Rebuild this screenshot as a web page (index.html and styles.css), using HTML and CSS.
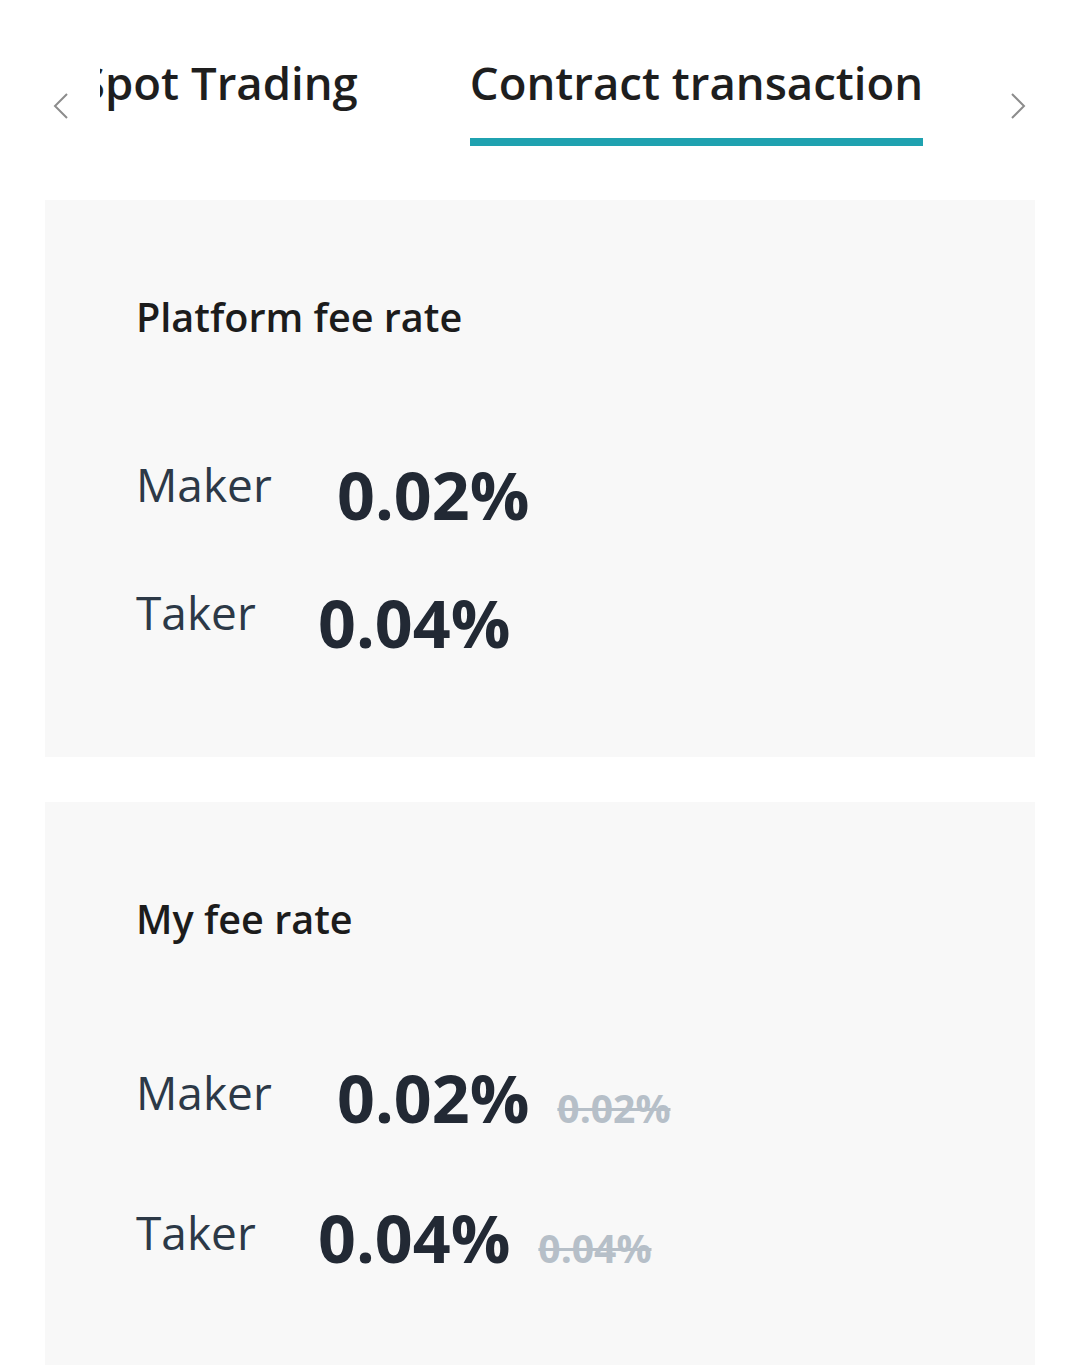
FILE: index.html
```html
<!DOCTYPE html>
<html lang="en">
<head>
<meta charset="utf-8">
<title>Fee rate</title>
<link rel="stylesheet" href="styles.css">
</head>
<body>
<div class="page">
  <header class="tabs">
    <svg class="arrow arrow-left" width="16" height="26" viewBox="0 0 16 26"><path d="M14 1 L2 13 L14 25" fill="none" stroke="#8c8c8c" stroke-width="2"/></svg>
    <div class="tab-viewport">
      <div class="tab-track">
        <div class="tab"><span class="tab-label">Spot Trading</span></div>
        <div class="tab tab-active"><span class="tab-label">Contract transaction</span><span class="tab-bar"></span></div>
      </div>
    </div>
    <svg class="arrow arrow-right" width="16" height="26" viewBox="0 0 16 26"><path d="M2 1 L14 13 L2 25" fill="none" stroke="#8c8c8c" stroke-width="2"/></svg>
  </header>

  <section class="card card-platform">
    <h2 class="card-title">Platform fee rate</h2>
    <div class="rows">
      <div class="row">
        <span class="label label-maker">Maker</span>
        <span class="value">0.02%</span>
      </div>
      <div class="row">
        <span class="label label-taker">Taker</span>
        <span class="value">0.04%</span>
      </div>
    </div>
  </section>

  <section class="card card-mine">
    <h2 class="card-title">My fee rate</h2>
    <div class="rows">
      <div class="row">
        <span class="label label-maker">Maker</span>
        <span class="value">0.02%</span>
        <span class="old">0.02%</span>
      </div>
      <div class="row">
        <span class="label label-taker">Taker</span>
        <span class="value">0.04%</span>
        <span class="old">0.04%</span>
      </div>
    </div>
  </section>
</div>
</body>
</html>
```

FILE: styles.css
```css
html, body {
  margin: 0;
  padding: 0;
  background: #ffffff;
}
body {
  font-family: "Open Sans", "Noto Sans", sans-serif;
  color: #1e1e1e;
}
.page {
  width: 1080px;
  height: 1365px;
  overflow: hidden;
}
.tabs {
  display: flex;
  align-items: flex-start;
  padding: 51px 54px 0 53px;
  height: 149px;
}
.arrow {
  flex: none;
  margin-top: 42px;
}
.tab-viewport {
  flex: 1;
  overflow: hidden;
  margin: 0 30px 0 31px;
}
.tab-track {
  display: flex;
  gap: 112px;
  margin-left: -20px;
  white-space: nowrap;
}
.tab {
  display: flex;
  flex-direction: column;
  align-items: stretch;
}
.tab-label {
  font-size: 45.5px;
  font-weight: 600;
  color: #1e1e1e;
  line-height: 63px;
}
.tab-bar {
  height: 8px;
  margin-top: 24px;
  background: #1fa2b0;
}
.card {
  margin: 0 45px;
  background: #f8f8f8;
  padding: 90px 91px 0;
  box-sizing: border-box;
}
.card-platform {
  height: 557px;
}
.card-mine {
  margin-top: 45px;
  height: 600px;
}
.card-title {
  margin: 0;
  font-size: 39.6px;
  font-weight: 600;
  color: #1c1c1c;
  line-height: 54px;
}
.rows {
  display: flex;
  flex-direction: column;
}
.card-platform .rows {
  margin-top: 105px;
  gap: 38px;
}
.card-mine .rows {
  margin-top: 106px;
  gap: 50px;
}
.row {
  display: flex;
  align-items: flex-start;
}
.label {
  font-size: 46px;
  font-weight: 400;
  color: #2c3947;
  line-height: 63px;
}
.card-platform .label { margin-top: 4px; }
.card-mine .label { margin-top: 9px; }
.label-maker { width: 201px; }
.label-taker { width: 182px; }
.value {
  font-size: 66.3px;
  font-weight: 700;
  color: #222934;
  line-height: 90px;
}
.old {
  margin-left: 28px;
  font-size: 39px;
  font-weight: 700;
  color: #b6bfc8;
  text-decoration: line-through;
  text-decoration-thickness: 3px;
}
.row:has(.old) {
  align-items: baseline;
}
.row:has(.old) .label {
  align-self: flex-start;
}
```
